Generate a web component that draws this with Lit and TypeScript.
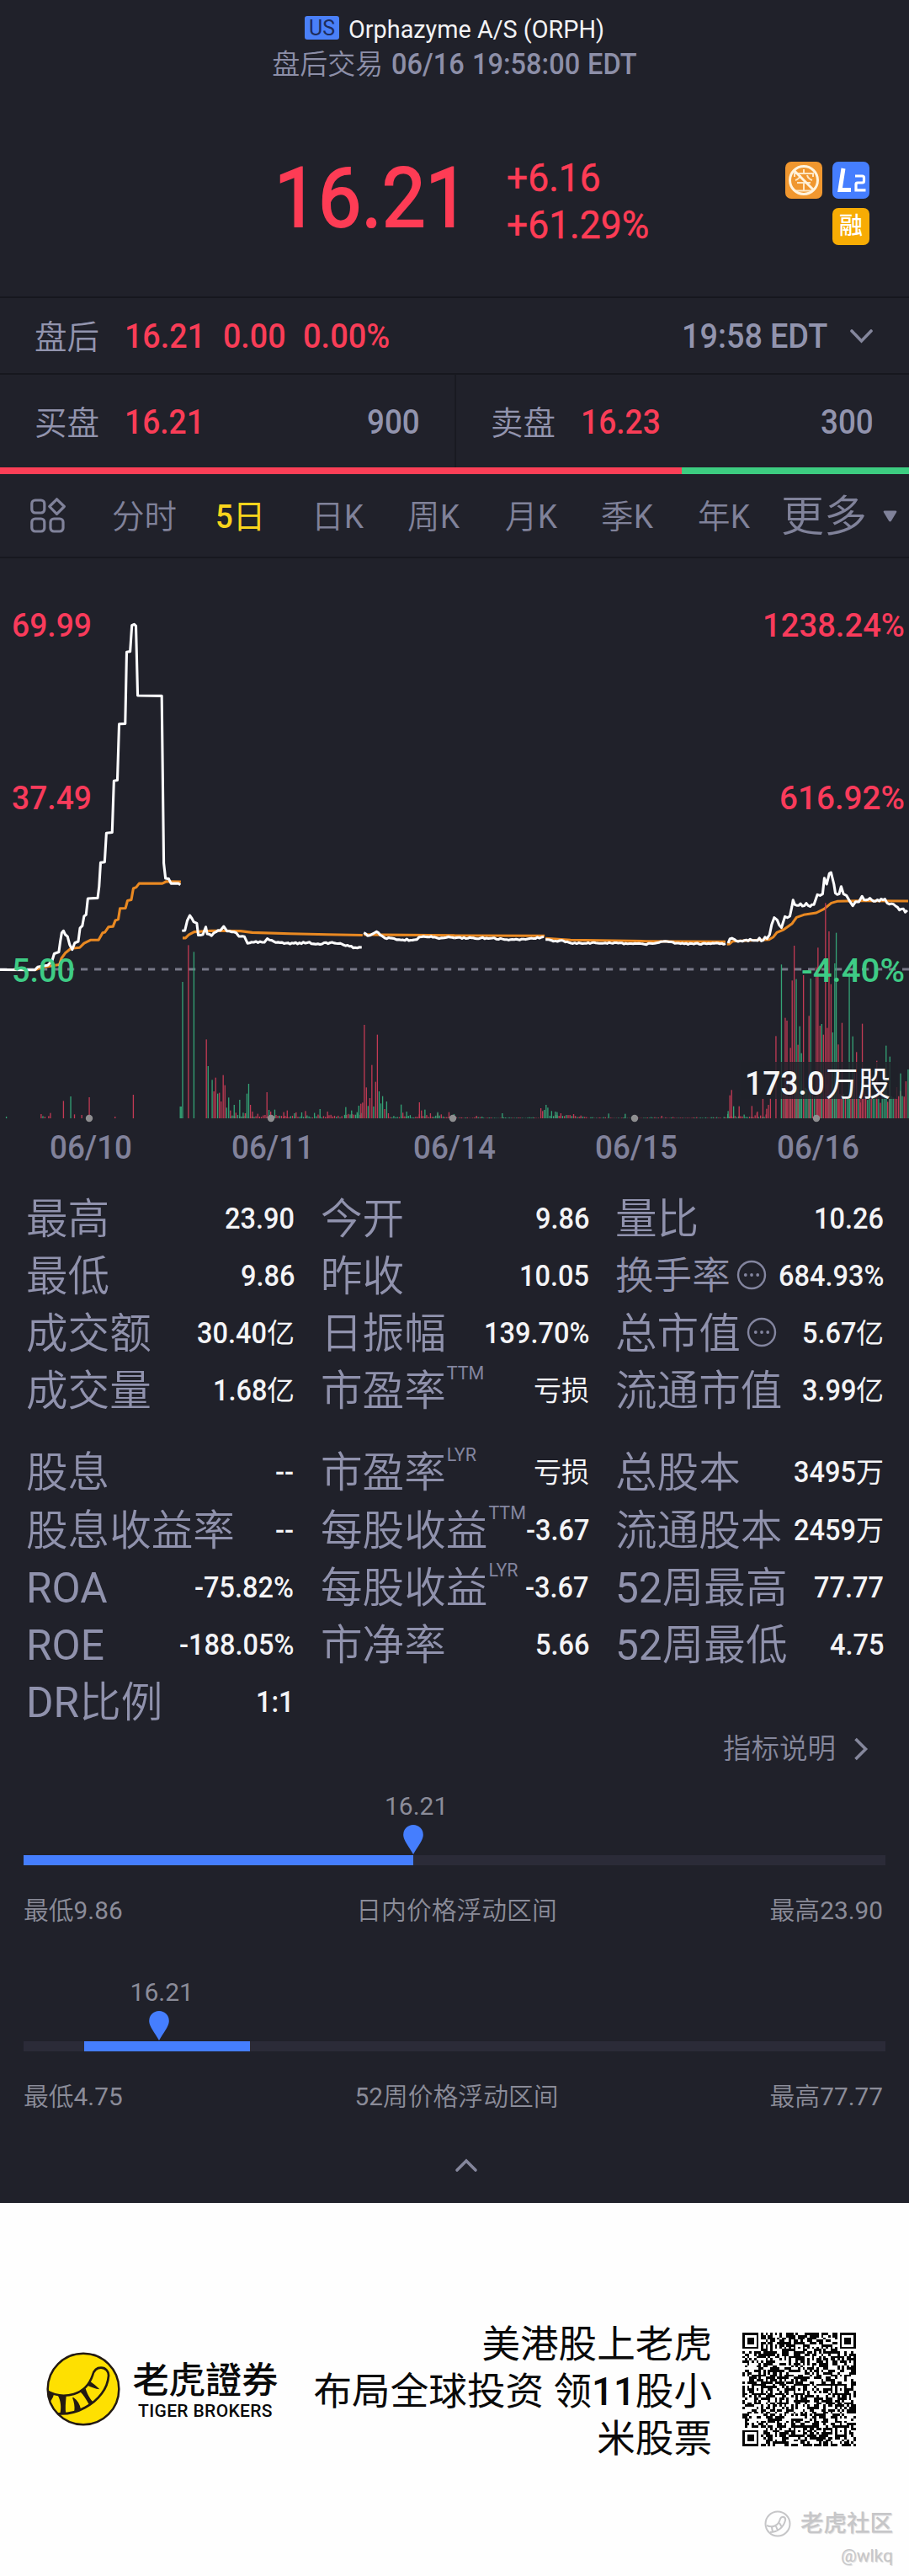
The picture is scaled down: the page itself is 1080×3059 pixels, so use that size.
import { LitElement, html, svg, css } from "lit";
import { customElement, property } from "lit/decorators.js";
import { classMap } from "lit/directives/class-map.js";
import { styleMap } from "lit/directives/style-map.js";

/* Advance widths (em) of the glyphs used in figures, so that condensed figures keep a correct box. */
const ADV: Record<string, number> = {
  ".": 0.276, ":": 0.263, "/": 0.395, "%": 0.738, "+": 0.559, "-": 0.36, " ": 0.249,
  E: 0.563, D: 0.652, T: 0.604, K: 0.63,
};
const advance = (t: string) => [...t].reduce((s, c) => s + (ADV[c] ?? 0.568), 0);

/* Condensed figure run. */
const num = (t: string, k = 0.93) => html`<span
  class="num"
  style=${styleMap({ width: `${(advance(t) * k).toFixed(3)}em`, "--k": String(k) })}
  ><span class="run">${t}</span></span
>`;

/* Figures condensed, CJK left as it is. */
const mixed = (t: string, k = 0.93) =>
  t.split(/([0-9.:%+\-]+)/).filter(Boolean).map((p) => (/^[0-9.:%+\-]+$/.test(p) ? num(p, k) : html`<span class="cjk">${p}</span>`));

const shared = css`
  * { box-sizing: border-box; }
  .num { display: inline-block; white-space: nowrap; font-weight: 500; }
  .run { display: inline-block; transform: scaleX(var(--k)); transform-origin: 0 50%; }
  svg { display: block; flex: none; }
`;

type Stat = { label: string; value: string; sup?: string; info?: boolean; small?: boolean };

const STATS_A: Stat[] = [
  { label: "最高", value: "23.90" }, { label: "今开", value: "9.86" }, { label: "量比", value: "10.26" },
  { label: "最低", value: "9.86" }, { label: "昨收", value: "10.05" }, { label: "换手率", value: "684.93%", info: true, small: true },
  { label: "成交额", value: "30.40亿" }, { label: "日振幅", value: "139.70%" }, { label: "总市值", value: "5.67亿", info: true },
  { label: "成交量", value: "1.68亿" }, { label: "市盈率", value: "亏损", sup: "TTM" }, { label: "流通市值", value: "3.99亿" },
];
const STATS_B: Stat[] = [
  { label: "股息", value: "--" }, { label: "市盈率", value: "亏损", sup: "LYR" }, { label: "总股本", value: "3495万" },
  { label: "股息收益率", value: "--" }, { label: "每股收益", value: "-3.67", sup: "TTM" }, { label: "流通股本", value: "2459万" },
  { label: "ROA", value: "-75.82%" }, { label: "每股收益", value: "-3.67", sup: "LYR" }, { label: "52周最高", value: "77.77" },
  { label: "ROE", value: "-188.05%" }, { label: "市净率", value: "5.66" }, { label: "52周最低", value: "4.75" },
  { label: "DR比例", value: "1:1" },
];

@customElement("stat-grid")
export class StatGrid extends LitElement {
  @property({ attribute: false }) items: Stat[] = [];
  static styles = [
    shared,
    css`
      :host { display: grid; grid-template-columns: repeat(3, 319px); grid-auto-rows: 68.2px; column-gap: 31px; padding: 0 30px 0 31px; }
      .stat { display: flex; align-items: center; justify-content: space-between; white-space: nowrap; line-height: 60px; padding-top: 1px; }
      .name { display: flex; align-items: center; font-size: 49.6px; color: #9092ad; font-weight: 350; }
      .latin { font-weight: 400; }
      .small { font-size: 45.6px; }
      .sup { align-self: flex-start; font-size: 21.5px; line-height: 22px; color: #83859f; margin: -2px 0 0 1px; font-weight: 400; }
      .info { margin-left: 7px; margin-top: -4px; }
      .value { font-size: 35px; color: #f4f4f6; }
      .value .cjk { font-size: 33px; font-weight: 400; }
    `,
  ];
  render() {
    return this.items.map(
      (s) => html`<div class="stat">
        <span class=${classMap({ name: true, small: !!s.small })}>
          <span>${s.label.split(/([A-Z0-9]+)/).map((p) => (/[A-Z0-9]/.test(p) ? html`<span class="latin">${p}</span>` : p))}</span>
          ${s.sup ? html`<span class="sup">${s.sup}</span>` : ""}
          ${s.info
            ? html`<svg class="info" width="36" height="36" viewBox="0 0 36 36" fill="none" stroke="#83859f" stroke-width="2.4">
                <circle cx="18" cy="18" r="16" />
                <g fill="#83859f" stroke="none"><circle cx="10.8" cy="18" r="1.9" /><circle cx="18" cy="18" r="1.9" /><circle cx="25.2" cy="18" r="1.9" /></g>
              </svg>`
            : ""}
        </span>
        <span class="value">${mixed(s.value, 0.93)}</span>
      </div>`,
    );
  }
}

/* Deterministic noise for the small volume bars and the code pattern. */
const rng = (seed: number) => () => {
  seed = (seed * 1664525 + 1013904223) >>> 0;
  return seed / 4294967296;
};

const RED = "#c23a54";
const GREEN = "#34a376";
type Bar = [number, number, 0 | 1];

/* Volume bars, x and height in pane units; 0 = up (red), 1 = down (green). */
const LEFT_BARS: Bar[] = [
  [22, 6, 1], [142, 15, 0], [148, 8, 1], [155, 6, 0], [168, 8, 0], [174, 19, 0], [219, 62, 0], [244, 78, 1], [257, 14, 0],
  [282, 12, 0], [308, 75, 0], [397, 6, 0], [460, 84, 0], [622, 42, 1], [625, 42, 1], [630, 486, 1], [650, 617, 0], [669, 593, 1],
  [712, 281, 0], [718, 186, 1], [732, 137, 1], [738, 96, 0], [744, 145, 0], [751, 88, 1], [757, 91, 0], [763, 60, 0], [770, 154, 0],
  [776, 118, 0], [782, 38, 1], [789, 74, 1], [795, 28, 0], [808, 48, 1], [814, 20, 0], [827, 66, 1], [839, 20, 1], [846, 18, 0],
  [852, 88, 1], [858, 123, 1], [864, 48, 0], [871, 24, 0], [921, 93, 0], [928, 30, 1], [934, 24, 0], [948, 31, 1], [979, 22, 0],
  [991, 28, 0], [1016, 18, 1], [1041, 21, 1], [1054, 26, 0], [1104, 33, 1], [1130, 24, 0], [1193, 40, 1], [1213, 28, 1],
  [1232, 22, 1], [1238, 45, 1], [1245, 52, 0], [1251, 56, 0], [1257, 333, 0], [1264, 110, 0], [1270, 44, 1], [1276, 72, 0],
  [1283, 190, 0], [1289, 42, 1], [1296, 130, 0], [1302, 298, 0], [1308, 96, 1], [1314, 53, 1], [1320, 79, 1], [1327, 33, 0],
  [1334, 60, 1], [1340, 18, 0], [1384, 49, 1], [1390, 20, 0], [1403, 24, 1], [1447, 57, 0], [1454, 28, 0], [1466, 31, 1],
  [1485, 18, 0], [1510, 22, 1], [1549, 22, 0],
];
const RIGHT_BARS: Bar[] = [
  [76, 9, 0], [95, 6, 1], [165, 18, 1], [298, 36, 0], [304, 26, 0], [310, 30, 1], [316, 48, 1], [322, 38, 1], [335, 26, 1],
  [348, 24, 1], [354, 22, 1], [367, 18, 0], [411, 15, 0], [436, 10, 0], [532, 17, 1], [589, 16, 1], [715, 9, 0],
  [944, 26, 1], [950, 82, 0], [956, 101, 0], [963, 43, 1], [982, 43, 0], [1026, 44, 0], [1045, 24, 0], [1064, 70, 0],
  [1077, 34, 0], [1083, 48, 0], [1090, 72, 0], [1109, 293, 0], [1128, 548, 1], [1141, 358, 0], [1147, 348, 0], [1159, 251, 0],
  [1165, 491, 0], [1172, 615, 0], [1179, 496, 1], [1185, 262, 0], [1191, 328, 1], [1197, 232, 1], [1204, 510, 0], [1223, 365, 0],
  [1229, 498, 1], [1248, 538, 0], [1254, 608, 0], [1261, 330, 0], [1267, 336, 1], [1273, 298, 0], [1280, 767, 0], [1286, 322, 0],
  [1292, 666, 0], [1299, 478, 0], [1305, 306, 1], [1312, 552, 1], [1317, 661, 1], [1324, 263, 0], [1337, 340, 0], [1362, 520, 1],
  [1374, 292, 1], [1387, 236, 0], [1407, 337, 0], [1457, 205, 0], [1489, 259, 1], [1502, 220, 1], [1539, 160, 1], [1565, 174, 1],
];

const filler = (from: number, to: number, lo: number, hi: number, seed: number): Bar[] => {
  const r = rng(seed);
  const out: Bar[] = [];
  for (let x = from; x <= to; x += 6.3) out.push([x, lo + r() * r() * (hi - lo), r() > 0.5 ? 1 : 0]);
  return out;
};
const LEFT_FILL = [
  ...filler(795, 880, 5, 22, 3), ...filler(883, 1062, 4, 24, 5), ...filler(1066, 1185, 3, 20, 7),
  ...filler(1189, 1250, 12, 30, 9), ...filler(1346, 1568, 3, 20, 12),
];
const RIGHT_FILL = [
  ...filler(0, 290, 1, 6, 2), ...filler(329, 420, 8, 16, 4), ...filler(424, 460, 3, 10, 6), ...filler(464, 920, 1, 5, 8),
  ...filler(930, 1080, 4, 26, 10), ...filler(1128, 1400, 70, 200, 14), ...filler(1400, 1562, 50, 190, 21),
];

const bars = (list: Bar[], base: number) =>
  list.map(([x, h, c]) => svg`<rect x=${x - 1.9} y=${base - h} width="3.8" height=${h} fill=${c ? GREEN : RED} />`);

/* Adds the fine jitter of minute prices between the given vertices. */
const jitter = (pts: number[][], amp: number, seed: number) => {
  const r = rng(seed);
  const out: string[] = [];
  pts.forEach(([x, y], i) => {
    out.push(`${x},${y}`);
    const n = pts[i + 1];
    if (!n) return;
    const steps = Math.floor((n[0] - x) / 6.3);
    for (let s = 1; s < steps; s++) out.push(`${x + ((n[0] - x) * s) / steps},${(y + ((n[1] - y) * s) / steps + (r() - 0.5) * amp).toFixed(1)}`);
  });
  return out.join(" ");
};

const PRICE_1 =
  "0,1427 120,1428 130,1418 145,1415 165,1412 180,1396 187,1372 203,1366 208,1330 213,1300 219,1293 225,1306 233,1313 240,1340 249,1358 258,1335 270,1330 276,1284 284,1276 290,1243 297,1238 303,1182 337,1180 342,1140 347,1058 361,1056 367,956 387,954 393,776 405,774 411,580 432,579 437,332 449,330 455,240 463,236 469,242 475,482 558,483 565,1060 571,1112 582,1114 590,1130 616,1130 622,1135";
const AVG_1 =
  "120,1428 150,1418 205,1410 212,1388 225,1370 245,1354 275,1351 290,1336 312,1325 340,1325 354,1300 362,1298 374,1280 390,1278 398,1257 408,1254 414,1216 433,1215 440,1189 453,1186 460,1147 470,1143 480,1130 560,1130 574,1123 624,1124";
const PRICE_2 = [
  [628, 1293], [638, 1292], [646, 1258], [655, 1240], [668, 1262], [679, 1267], [684, 1308], [700, 1306], [710, 1280], [715, 1304],
  [730, 1310], [745, 1297], [760, 1292], [772, 1278], [783, 1294], [800, 1297], [815, 1300], [824, 1312], [843, 1313], [854, 1336],
  [868, 1332], [912, 1333], [922, 1320], [945, 1330], [980, 1337], [1060, 1334], [1104, 1340], [1125, 1334], [1180, 1339], [1225, 1351], [1248, 1350],
];
const AVG_2 = "630,1318 640,1318 652,1306 670,1297 730,1293 830,1294 870,1299 1000,1303 1130,1306 1251,1308";
const PRICE_3 = [
  [1255, 1300], [1268, 1310], [1285, 1304], [1299, 1296], [1312, 1308], [1328, 1318], [1360, 1320], [1384, 1325], [1430, 1324],
  [1455, 1314], [1500, 1315], [1515, 1320], [1540, 1316], [1568, 1318],
];
const PRICE_4 = [[0, 462], [130, 462], [180, 467], [245, 467], [300, 459], [308, 457]];
const PRICE_5 = [[314, 467], [355, 474], [370, 470], [402, 480], [520, 479], [655, 484], [690, 481], [720, 474], [780, 482], [935, 482]];
const PRICE_6 = [
  [944, 480], [950, 465], [1000, 470], [1078, 464], [1087, 450], [1094, 415], [1103, 389], [1113, 397], [1128, 425], [1140, 385],
  [1157, 384], [1164, 350], [1168, 326], [1174, 343], [1240, 343], [1252, 307], [1270, 305], [1276, 248], [1284, 270], [1293, 232],
  [1299, 228], [1309, 270], [1314, 302], [1327, 305], [1334, 278], [1342, 305], [1352, 310], [1362, 328], [1374, 347], [1384, 332],
  [1395, 333], [1406, 313], [1420, 326], [1485, 323], [1500, 341], [1522, 348], [1535, 362], [1562, 363],
];

@customElement("price-chart")
export class PriceChart extends LitElement {
  static styles = [
    shared,
    css`
      :host { display: block; }
      text { font-family: Roboto, "Noto Sans CJK SC", sans-serif; font-size: 39.5px; font-weight: 500; }
      .up { fill: #f93b5b; }
      .down { fill: #3ecb85; }
      .day { fill: #81829b; }
      .vol { fill: #f6f6f7; }
      .cjk { font-weight: 400; }
      .price { fill: none; stroke: #fcfcfd; stroke-width: 9; stroke-linejoin: round; }
      .avg { fill: none; stroke: #e98922; stroke-width: 9; stroke-linejoin: round; }
    `,
  ];
  private label(cls: string, x: number, y: number, w: number, t: string) {
    return svg`<text class=${cls} x=${x} y=${y} textLength=${w} lengthAdjust="spacingAndGlyphs">${t}</text>`;
  }
  render() {
    const k = 540 / 1568;
    const v = 1 / 3;
    return html`<svg width="1080" height="750" viewBox="0 663 1080 750">
      <line x1="0" x2="1080" y1="1151" y2="1151" stroke="#777887" stroke-width="3" stroke-dasharray="8.2 7.8" />
      <g transform="translate(0 1100) scale(${k} ${v})">${bars([...LEFT_FILL, ...LEFT_BARS], 684)}</g>
      <g transform="translate(540 960) scale(${k} ${v})">
        <polyline class="avg" points="0,453 311,454" />
        <polyline class="avg" points="314,463 400,469 660,473 935,475" />
        <polyline class="avg" points="940,484 948,483 960,473 1085,467 1100,458 1112,442 1135,432 1165,410 1180,388 1205,379 1248,372 1275,358 1300,337 1320,331 1400,329 1565,330" />
        <polyline class="price" points=${jitter(PRICE_4, 5, 31)} />
        <polyline class="price" points=${jitter(PRICE_5, 5, 33)} />
        <polyline class="price" points=${jitter(PRICE_6, 14, 35)} />
        ${bars([...RIGHT_FILL, ...RIGHT_BARS], 1104)}
      </g>
      <g transform="translate(0 660) scale(${k})">
        <polyline class="avg" points=${AVG_1} />
        <polyline class="avg" points=${AVG_2} />
        <polyline class="avg" points="1255,1306 1320,1307 1568,1309" />
        <polyline class="price" points=${PRICE_1} />
        <polyline class="price" points=${jitter(PRICE_2, 6, 37)} />
        <polyline class="price" points=${jitter(PRICE_3, 6, 39)} />
      </g>
      <rect x="880" y="1261" width="187" height="44" fill="#20212a" fill-opacity="0.82" />
      ${[106, 322, 538, 754, 970].map((x) => svg`<circle cx=${x} cy="1328" r="4.2" fill="#8e8e90" />`)}
      ${this.label("up", 14, 756, 95, "69.99")} ${this.label("up", 14, 961, 95, "37.49")} ${this.label("down", 14, 1166, 75, "5.00")}
      ${this.label("up", 906, 756, 169, "1238.24%")} ${this.label("up", 926, 961, 149, "616.92%")}
      ${this.label("down", 952, 1166, 123, "-4.40%")}
      ${["06/10", "06/11", "06/14", "06/15", "06/16"].map((t, i) => this.label("day", 59 + i * 216, 1376, 98, t))}
      <text class="vol" x="885" y="1300" textLength="95" lengthAdjust="spacingAndGlyphs">173.0</text>
      <text class="vol cjk" x="981" y="1300.5" textLength="77" lengthAdjust="spacingAndGlyphs">万股</text>
    </svg>`;
  }
}

@customElement("price-range")
export class PriceRange extends LitElement {
  @property() low = "";
  @property() high = "";
  @property() caption = "";
  @property({ type: Number }) from = 0;
  @property({ type: Number }) to = 0;
  @property({ type: Number }) at = 0;
  static styles = [
    shared,
    css`
      :host { display: block; height: 221px; padding: 10px 28px 0; color: #8b8c99; font-size: 30px; line-height: 30px; }
      .marker { width: 0; height: 84px; display: flex; flex-direction: column; align-items: center; gap: 7px; margin-bottom: -10px; padding-top: 1px; }
      .cur { white-space: nowrap; padding-left: 7px; }
      .track { height: 12px; background: #2b2b38; display: flex; }
      .fill { background: #457efe; }
      .ends { display: grid; grid-template-columns: 1fr auto 1fr; margin-top: 36px; line-height: 36px; padding: 0 1px 0 0; font-size: 29.8px; font-weight: 350; }
      .hi { text-align: right; padding-right: 2px; }
      .mid { padding-left: 6px; }
      .latin { font-weight: 400; }
    `,
  ];
  render() {
    const latin = (t: string) => html`<span class="latin">${t}</span>`;
    return html`
      <div class="marker" style=${styleMap({ marginLeft: `${this.at}%` })}>
        <span class="cur">16.21</span>
        <svg width="24" height="35" viewBox="0 0 24 35"><path fill="#457efe" d="M12 0a11.8 11.8 0 0 1 11.8 12.2C23.8 18 17 26 12 35 7 26 .2 18 .2 12.2A11.8 11.8 0 0 1 12 0z" /></svg>
      </div>
      <div class="track">
        <div style=${styleMap({ width: `${this.from}%` })}></div>
        <div class="fill" style=${styleMap({ width: `${this.to - this.from}%` })}></div>
      </div>
      <div class="ends">
        <span>最低${latin(this.low)}</span>
        <span class="mid">${this.caption.split(/([0-9]+)/).map((p) => (/[0-9]/.test(p) ? latin(p) : p))}</span>
        <span class="hi">最高${latin(this.high)}</span>
      </div>
    `;
  }
}

/* 49-module code: finder, timing and alignment patterns over a noise field. */
const codePath = () => {
  const n = 49;
  const r = rng(77);
  const grid = Array.from({ length: n }, () => Array.from({ length: n }, () => r() > 0.5));
  const square = (cx: number, cy: number, rad: number) => {
    for (let y = -rad; y <= rad; y++)
      for (let x = -rad; x <= rad; x++) {
        const gy = cy + y, gx = cx + x;
        if (gy < 0 || gx < 0 || gy >= n || gx >= n) continue;
        const d = Math.max(Math.abs(x), Math.abs(y));
        grid[gy][gx] = rad === 2 ? d !== 1 : d !== 2 && d !== 4;
      }
  };
  for (let i = 0; i < n; i++) grid[6][i] = grid[i][6] = i % 2 === 0;
  for (const [a, b] of [[24, 6], [6, 24], [24, 24], [42, 24], [24, 42], [42, 42]]) square(a, b, 2);
  for (const [a, b] of [[3, 3], [45, 3], [3, 45]]) square(a, b, 4);
  let d = "";
  grid.forEach((row, y) => row.forEach((on, x) => { if (on) d += `M${x} ${y}h1v1h-1z`; }));
  return d;
};

@customElement("app-footer")
export class AppFooter extends LitElement {
  static styles = [
    shared,
    css`
      :host { display: flex; flex-direction: column; height: 443px; background: #fefefe; color: #0a0a0a; }
      .promo { display: flex; height: 340px; padding: 97px 63px 0 55px; }
      .logo { margin-top: 80px; }
      .brand { margin: 87px 0 0 13px; width: 176px; display: flex; flex-direction: column; align-items: center; white-space: nowrap; }
      .zh { font: 500 43.2px/56px Roboto, "Noto Sans CJK TC", sans-serif; }
      .en { font-size: 21px; line-height: 24px; font-weight: 500; margin-top: -5px; letter-spacing: 0.35px; }
      .slogan { flex: 1; text-align: right; font-size: 45.6px; line-height: 56px; margin-top: 44px; padding-right: 36px; white-space: nowrap; }
      .ones { font-weight: 500; }
      .code { margin-top: 57px; }
      .mark { display: flex; flex-direction: column; align-items: flex-end; padding: 20px 19px 0 0; color: #c6c6c8; font-weight: 500; }
      .line { display: flex; align-items: center; gap: 11px; font-size: 27.5px; line-height: 42px; height: 42px; text-shadow: 1px 1px 1px #dcdcde; }
      .user { font-size: 21px; line-height: 26px; margin-top: 4px; font-weight: 400; text-shadow: 1px 1px 1px #d8d8da; }
    `,
  ];
  render() {
    return html`
      <div class="promo">
        <svg class="logo" width="88" height="88" viewBox="164 158 264 264">
          <clipPath id="disc"><circle cx="296" cy="290" r="127" /></clipPath>
          <circle cx="296" cy="290" r="127" fill="#fee001" />
          <g clip-path="url(#disc)" fill="#231a12">
            <path fill="none" stroke="#231a12" stroke-width="8" d="M165 296C195 314 232 317 262 308C298 297 318 274 329 241C334 222 346 214 359 214C376 214 387 228 386 243C383 286 352 330 302 356C270 374 238 380 205 378" />
            <path d="M168 297L191 309C188 322 180 334 172 342L160 320z" />
            <path d="M206 314L235 315C233 338 231 360 234 377L213 379C218 356 216 334 206 314z" />
            <path d="M261 320C275 330 284 345 287 361L264 369C266 352 263 335 257 321z" />
            <path d="M287 300L304 288C309 305 318 324 330 335L317 346C307 328 296 311 285 300z" />
            <path d="M311 277L320 262C330 270 341 277 354 291C339 289 324 283 311 277z" />
          </g>
          <circle cx="296" cy="290" r="127" fill="none" stroke="#231a12" stroke-width="7.5" />
        </svg>
        <div class="brand"><span class="zh">老虎證券</span><span class="en">TIGER BROKERS</span></div>
        <div class="slogan">美港股上老虎<br />布局全球投资 领<span class="ones">11</span>股小<br />米股票</div>
        <svg class="code" width="135" height="135" viewBox="0 0 49 49" shape-rendering="crispEdges"><path fill="#050505" d=${codePath()} /></svg>
      </div>
      <div class="mark">
        <div class="line">
          <svg width="32" height="32" viewBox="0 0 32 32" fill="none" stroke="#c6c6c8" stroke-width="2">
            <circle cx="16" cy="16" r="14.5" />
            <path d="M3 18c6 3 14 1 16-8 2-4 7-2 6 2-2 8-9 14-18 14M9 20l1 6M14 19l2 5M18 15l3 5" />
          </svg>
          <span>老虎社区</span>
        </div>
        <span class="user">@wlkq</span>
      </div>
    `;
  }
}

@customElement("app-root")
export class AppRoot extends LitElement {
  static styles = [
    shared,
    css`
      :host { display: block; width: 1080px; height: 3059px; overflow: hidden; background: #20212a; font-family: Roboto, "Noto Sans CJK SC", sans-serif; color: #9294ae; }
      .head { height: 354px; border-bottom: 2px solid #16171e; }
      .title { display: flex; justify-content: center; align-items: center; gap: 11px; padding-top: 17px; height: 53px; color: #f3f3f5; font-size: 28.8px; line-height: 34px; }
      .market { width: 41px; height: 28px; margin-top: -5px; border-radius: 3px; background: #4a80f8; color: #1d2c5c; font-size: 25px; line-height: 29px; text-align: center; }
      .time { display: flex; justify-content: center; gap: 10px; font-size: 35px; line-height: 48px; height: 48px; color: #8d8fa8; white-space: nowrap; }
      .time .zh { font-size: 33px; font-weight: 350; }
      .quote { display: grid; grid-template-columns: 565px 1fr auto; margin-top: 82px; padding: 0 47px 0 0; color: #fe3c55; }
      .quote .num { font-weight: 400; }
      .last { font-size: 98px; line-height: 104px; text-align: right; padding: 1px 4px 0 0; -webkit-text-stroke: 2px #fe3c55; }
      .delta { display: flex; flex-direction: column; padding-left: 37px; font-size: 46.5px; line-height: 56px; -webkit-text-stroke: 0.5px #fe3c55; }
      .badges { display: grid; grid-template-columns: 44px 44px; column-gap: 12px; row-gap: 11px; margin-top: 9px; align-content: start; }
      .badge { height: 44px; border-radius: 7px; color: #fff; display: grid; place-items: center; }
      .short { background: #f0972f; }
      .l2 { background: #457efe; }
      .margin { background: #f7ac04; grid-column: 2; font-size: 28px; line-height: 40px; font-weight: 500; }
      .row { display: flex; align-items: center; height: 91px; padding: 3px 41px 2px; border-bottom: 2px solid #16171e; font-size: 40px; white-space: nowrap; }
      .red { color: #f93d57; }
      .zh38 { font-size: 38.5px; font-weight: 350; width: 107px; margin-top: -4px; }
      .gapped { display: flex; gap: 21px; flex: 1; }
      .clock { margin-right: 24px; }
      .book { display: grid; grid-template-columns: 1fr 1fr; height: 110px; }
      .side { display: flex; align-items: center; padding: 2px 41px 0; font-size: 40px; white-space: nowrap; }
      .side + .side { border-left: 2px solid #191a21; padding-right: 42px; }
      .grow { flex: 1; }
      .ratio { display: flex; height: 8px; background: #3dcd81; }
      .ratio-buy { background: #fb3f57; }
      .tabs { display: flex; align-items: center; height: 100px; border-bottom: 2px solid #17181f; font-size: 38.5px; line-height: 60px; color: #80829a; padding: 2px 14px 0 35px; white-space: nowrap; }
      .tab { flex: none; font-weight: 350; padding-top: 2px; }
      .tab .num { font-weight: 400; }
      .active { color: #f8d41c; font-weight: 400; }
      .active .num { font-weight: 500; }
      .more { font-size: 51px; }
      .group-gap { height: 29px; }
      .explain { display: flex; justify-content: flex-end; align-items: center; height: 43px; padding-right: 48px; gap: 21px; font-size: 33.5px; line-height: 40px; font-weight: 350; color: #85879c; }
      .ranges { padding-top: 20px; }
      .fold { height: 55px; display: flex; justify-content: center; padding: 2px 0 0 27px; }
    `,
  ];

  private tabs = [
    { t: "分时", w: 123 }, { t: "5日", w: 114, on: true }, { t: "日K", w: 114 }, { t: "周K", w: 116 },
    { t: "月K", w: 114 }, { t: "季K", w: 115 }, { t: "年K", w: 99 },
  ];

  render() {
    return html`
      <header class="head">
        <div class="title"><span class="market">US</span><span>Orphazyme A/S (ORPH)</span></div>
        <div class="time"><span class="zh">盘后交易</span><span>${num("06/16", 0.93)} ${num("19:58:00", 0.93)} ${num("EDT", 0.93)}</span></div>
        <div class="quote">
          <div class="last">${num("16.21", 0.94)}</div>
          <div class="delta"><span>${num("+6.16", 0.955)}</span><span>${num("+61.29%", 0.955)}</span></div>
          <div class="badges">
            <span class="badge short">
              <svg width="44" height="44" viewBox="0 0 44 44" fill="none" stroke="#fff3dd">
                <path stroke-width="2" opacity="0.85" d="M22 9v4M11 18v-4h22v4M18 16c-1 4-3 5-6 6M26 16c1 4 3 5 6 6M14 25h16M22 25v9M12 34.5h20" />
                <circle cx="22" cy="22" r="16.5" stroke-width="3" />
                <path stroke-width="3" d="M10.5 10.5l23 23" />
              </svg>
            </span>
            <span class="badge l2">
              <svg width="44" height="44" viewBox="0 0 44 44" fill="none" stroke="#fff">
                <path stroke-width="5" d="M13 8L9 33.5h13" />
                <path stroke-width="3.2" d="M27 17h8.5q2 0 2 2v4q0 2-2 2h-5.5q-2 0-2 2v6.8h11.5" />
              </svg>
            </span>
            <span class="badge margin">融</span>
          </div>
        </div>
      </header>

      <section class="row">
        <span class="zh38">盘后</span>
        <span class="gapped red">${num("16.21", 0.94)}${num("0.00", 0.94)}${num("0.00%", 0.95)}</span>
        <span class="clock">${num("19:58", 0.945)} ${num("EDT", 0.945)}</span>
        <svg width="31" height="20" viewBox="0 0 31 20" fill="none" stroke="#84869c" stroke-width="3.6" stroke-linecap="round"><path d="M4 4l11.5 12L27 4" /></svg>
      </section>

      <section class="book">
        <div class="side"><span class="zh38">买盘</span><span class="red grow">${num("16.21", 0.93)}</span>${num("900", 0.92)}</div>
        <div class="side"><span class="zh38">卖盘</span><span class="red grow">${num("16.23", 0.93)}</span>${num("300", 0.92)}</div>
      </section>
      <div class="ratio"><div class="ratio-buy" style=${styleMap({ width: "75%" })}></div></div>

      <nav class="tabs">
        <svg width="98" height="44" viewBox="0 0 98 44" fill="none" stroke="#80829a" stroke-width="3.2">
          <rect x="2.8" y="3" width="15" height="15" rx="4" /><rect x="2.8" y="25" width="15" height="15" rx="4" />
          <rect x="25" y="25" width="15" height="15" rx="4" />
          <path stroke-linejoin="round" d="M32.5 1.8L41.3 10.5 32.5 19.3 23.8 10.5z" />
        </svg>
        ${this.tabs.map(
          (x) => html`<span class=${classMap({ tab: true, active: !!x.on })} style=${styleMap({ width: `${x.w}px` })}
            >${x.t.split(/([5K])/).map((p) => (/[5K]/.test(p) ? num(p, 0.95) : p))}</span
          >`,
        )}
        <span class="tab more">更多</span>
        <span class="grow"></span>
        <svg width="17" height="14" viewBox="0 0 17 14"><path fill="#80829a" d="M2 .5h13q2 0 1 2L10 12.5q-1.5 2-3 0L1 2.5Q0 .5 2 .5z" /></svg>
      </nav>

      <price-chart></price-chart>
      <stat-grid .items=${STATS_A}></stat-grid>
      <div class="group-gap"></div>
      <stat-grid .items=${STATS_B}></stat-grid>
      <div class="explain">
        <span>指标说明</span>
        <svg width="18" height="28" viewBox="0 0 18 28" fill="none" stroke="#85879c" stroke-width="3.6"><path d="M2.5 2L14.5 14 2.5 26" /></svg>
      </div>
      <section class="ranges">
        <price-range low="9.86" high="23.90" caption="日内价格浮动区间" from="0" to="45.23" at="45.23"></price-range>
        <price-range low="4.75" high="77.77" caption="52周价格浮动区间" from="7" to="26.23" at="15.7"></price-range>
      </section>
      <div class="fold">
        <svg width="28" height="17" viewBox="0 0 28 17" fill="none" stroke="#84869c" stroke-width="3.6" stroke-linecap="round"><path d="M3 14L14 3l11 11" /></svg>
      </div>
      <app-footer></app-footer>
    `;
  }
}
